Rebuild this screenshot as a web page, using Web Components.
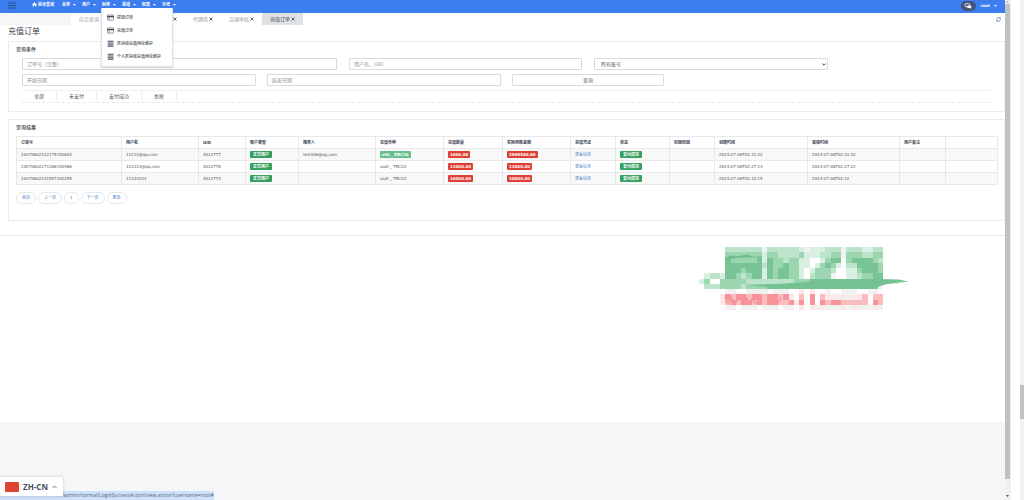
<!DOCTYPE html>
<html lang="zh-CN">
<head>
<meta charset="utf-8">
<title>充值订单</title>
<style>
html,body{margin:0;height:100%;overflow:hidden;background:#fff}
body{font-family:"DejaVu Sans","Noto Sans CJK SC",sans-serif;font-size:4px;line-height:8px;color:#4b5560}
</style>
</head>
<body>
<admin-app></admin-app>
<script>
const define = (name, html, setup) => customElements.define(name, class extends HTMLElement {
  connectedCallback() {
    if (this.shadowRoot) return;
    const root = this.attachShadow({mode: 'open'});
    const t = document.createElement('template');
    t.innerHTML = '<style>*{box-sizing:border-box}a{text-decoration:none;color:inherit}button{font:inherit;color:inherit;background:none;border:0;padding:0;margin:0}</style>' + html(this);
    root.append(t.content.cloneNode(true));
    if (setup) setup(this, root);
  }
});

const caret = '<svg width="3" height="2" viewBox="0 0 3 2"><path d="M0 0h3L1.5 1.8z" fill="currentColor"/></svg>';

define('nav-item', () => `
<style>:host{display:block;flex:none}a{display:flex;align-items:center;gap:3px}</style>
<a href="#"><slot></slot>${caret}</a>`);

define('menu-item', el => `
<style>:host{display:block}a{display:flex;align-items:center;gap:3px;height:13px;padding-left:5px;white-space:nowrap}</style>
<a href="#"><svg width="7" height="7" viewBox="0 0 6 6">${el.getAttribute('icon') === 'card'
  ? '<rect x=".3" y=".8" width="5.4" height="4.4" rx=".5" fill="#fff" stroke="#475060" stroke-width=".5"/><path d="M0 1.6h6v1.3H0z" fill="#475060"/><path d="M1 4.2h1.6" stroke="#475060" stroke-width=".5"/>'
  : '<path d="M.6 1h5M.6 2.5h5M.6 4h5M.6 5.4h5" stroke="#475060" stroke-width=".9"/>'}</svg><slot></slot></a>`);

define('top-bar', () => `
<style>
:host{display:flex;flex:none;position:relative;z-index:2;height:13px;background:#3c7df0;color:#fff;font-weight:700}
.burger{margin:2px 0 0 8px;width:8px;height:7px;display:block}
.burger svg{display:block}
nav{display:flex;gap:6px;margin-left:16px;height:9px;align-items:center}
.home{display:flex;align-items:center;gap:1px;margin-right:2px}
.right{margin-left:auto;display:flex;align-items:center;height:12px;padding-right:8px}
.chat{width:15px;height:10px;border-radius:5px;background:#47527a;display:flex;align-items:center;justify-content:center;margin-right:5px}
.user{display:flex;align-items:center;gap:4px}
.menu{position:absolute;left:101px;top:8px;width:72px;padding:3px 0;background:#fff;border:1px solid #e0e2e5;border-top:0;border-radius:1px;box-shadow:0 1px 2px #0003;color:#3d4652;font-weight:500}
</style>
<button class="burger" aria-label="菜单"><svg width="8" height="7" viewBox="0 0 8 7"><path d="M0 1h8M0 3.5h8M0 6h8" stroke="#29518f" stroke-width="1.2"/></svg></button>
<nav>
<a href="#" class="home"><svg width="5" height="5" viewBox="0 0 5 5"><path d="M2.5.3 0 2.6h.7v2h1.2V3.2h1.2v1.4h1.2v-2H5z" fill="#fff"/></svg>综合查询</a>
<nav-item>业务</nav-item><nav-item>用户</nav-item><nav-item>财务</nav-item><nav-item>渠道</nav-item><nav-item>配置</nav-item><nav-item>系统</nav-item>
</nav>
<div class="right"><button class="chat" aria-label="消息"><svg width="8" height="6" viewBox="0 0 8 6"><rect x="1" y=".6" width="4.6" height="3.2" rx="1" fill="none" stroke="#fff" stroke-width=".8"/><path d="M3.4 2.4h3.8v2.5H7l.2 1-1.4-1H3.4z" fill="#fff"/></svg></button>
<a href="#" class="user">root${caret}</a></div>
<div class="menu"><menu-item icon="card">提现订单</menu-item><menu-item icon="card">充值订单</menu-item><menu-item>区块链充值地址维护</menu-item><menu-item>个人区块链充值地址维护</menu-item></div>`);

define('page-tab', el => `
<style>
:host{display:flex;align-items:center;justify-content:flex-end;gap:1px;height:12px;padding:0 8px;font-size:5px;color:#999;white-space:nowrap}
:host([active]){background:#dfe1e2;color:#3f4955}
:host([wide]){width:78px}
:host([pinned]){padding-right:8px}
button{display:flex}
</style><a href="#"><slot></slot></a>${el.hasAttribute('pinned') ? '' : '<button aria-label="关闭"><svg width="4" height="4" viewBox="0 0 4 4"><path d="M.5.5l3 3M3.5.5l-3 3" stroke="#5b636d" stroke-width="1"/></svg></button>'}`);

define('tab-strip', () => `
<style>
:host{display:flex;flex:none;height:12px}
.lead{width:71px;background:#f5f6f7}
.refresh{margin:4px 4px 0 auto;height:5px;display:block}
svg{display:block}
</style><div class="lead"></div><slot></slot>
<button class="refresh" aria-label="刷新"><svg width="5" height="5" viewBox="0 0 5 5"><path d="M.6 2.3A1.9 1.9 0 0 1 4 1.4M4.4 2.7A1.9 1.9 0 0 1 1 3.6" fill="none" stroke="#5277a5" stroke-width=".7"/><path d="M4.7.3v1.7H3zM.3 4.7V3H2z" fill="#5277a5"/></svg></button>`);

define('data-panel', el => `
<style>
:host{display:block;border:1px solid #ececec;border-right-color:#f1f1f1;margin:0 0 7px 8px;padding:3px 8px 8px 7px}
h2{margin:0 0 5px;font-size:5px;line-height:8px;font-weight:500;color:#39424e}
</style><h2>${el.getAttribute('heading')}</h2><slot></slot>`);

define('search-form', () => `
<style>
:host{display:block;padding:0 6px}
.row{display:grid;gap:12px;margin-bottom:4px}
.one{grid-template-columns:315fr 233fr 234fr 150fr}
.two{grid-template-columns:234fr 234fr 152fr 315fr;gap:11px}
input,select,.go{width:100%;height:12px;border:1px solid #d9dbdd;border-radius:1px;background:#fff;font:inherit;font-size:5px;color:#555;padding:0 4px;margin:0;outline:0;display:block}
input::placeholder{color:#929292;opacity:1}
.sel{position:relative}
select{appearance:none;padding-left:6px}
.sel svg{position:absolute;right:2px;top:5px}
.go{text-align:center}
ul{display:flex;margin:0;padding:0;list-style:none;border-top:1px solid #f0f0f0;border-bottom:1px dashed #e9e9e9;font-size:5px}
li{height:11px;padding:0 12px;border-right:1px solid #eee;line-height:11px}
</style>
<form>
<div class="row one"><input aria-label="订单号" placeholder="订单号（完整）"><input aria-label="用户名" placeholder="用户名、UID"><div class="sel"><select aria-label="账号"><option>所有账号</option></select><svg width="4" height="3" viewBox="0 0 4 3"><path d="M.4.6 2 2.2 3.6.6" fill="none" stroke="#333" stroke-width=".9"/></svg></div></div>
<div class="row two"><input aria-label="开始日期" placeholder="开始日期"><input aria-label="结束日期" placeholder="结束日期"><button type="button" class="go">查询</button></div>
</form>
<ul><li><a href="#">全部</a></li><li><a href="#">未支付</a></li><li><a href="#">支付成功</a></li><li><a href="#">失败</a></li></ul>`);

define('status-badge', () => `
<style>
:host{display:inline-block;height:7px;line-height:7px;padding:0 2px;border-radius:1px;background:#35a05f;color:#fff;font-weight:700;vertical-align:middle}
:host([kind=red]){background:#df4034}
:host([kind=mint]){background:#67bf8e}
:host([kind=green]){padding:0 3px}
</style><slot></slot>`);

const widths = [105,77,47,53,77,68,59,68,45,54,45,93,92,46,52];
const heads = ['订单号','用户名','UID','账户类型','推荐人','充值币种','充值数量','实际到账金额','充值凭证','状态','驳回原因','创建时间','审核时间','用户备注',''];
const green = s => `<status-badge kind="green">${s}</status-badge>`;
const red = s => `<status-badge kind="red">${s}</status-badge>`;
const row = (no, user, uid, ref, coin, n, real, t1, t2) =>
  [no, user, uid, green('正式用户'), ref, coin, red(n), red(real), '<a href="#">查看信息</a>', green('支付成功'), '', t1, t2, '', ''];
const orders = [
  row('24070602312175150844','11212@qq.com','4012777','test006@qq.com','<status-badge kind="mint">eth _ ERC20</status-badge>','1000.00','2969540.00','2024-07-06T02:31:22','2024-07-06T02:31:32'),
  row('24070602271286192986','123123@qq.com','4012778','','usdt _ TRC20','11000.00','11000.00','2024-07-06T02:27:13','2024-07-06T02:27:22'),
  row('24070602101557340255','11333333','4012774','','usdt _ TRC20','10000.00','10000.00','2024-07-06T02:10:15','2024-07-06T02:12')
];
define('order-table', () => `
<style>
:host{display:block}
table{width:100%;table-layout:fixed;border-collapse:collapse}
th,td{border:1px solid #e9e9e9;height:12px;padding:0 0 0 4px;text-align:left;white-space:nowrap;line-height:8px;vertical-align:middle}
th{color:#39424e}
tbody tr:nth-child(odd){background:#f8f8f8}
td a{color:#4d8ac6}
</style>
<table><colgroup>${widths.map(w => `<col style="width:${w}px">`).join('')}</colgroup>
<thead><tr>${heads.map(h => `<th>${h}</th>`).join('')}</tr></thead>
<tbody>${orders.map(r => `<tr>${r.map(c => `<td>${c}</td>`).join('')}</tr>`).join('')}</tbody></table>`);

define('page-nav', () => `
<style>
:host{display:flex;gap:2px;margin:7px 0 8px;color:#4585c4}
a{height:12px;line-height:10px;border:1px solid #e6e8ea;border-radius:6px;padding:0 5px}
.now{color:#b0605c}
</style><a href="#">首页</a><a href="#">上一页</a><a href="#" class="now">1</a><a href="#">下一页</a><a href="#">尾页</a>`);

/* Mosaic emblem: one letter per cell, each letter is a tint. */
const tints = {g:'#f0f1f0',1:'#d9efe1',2:'#bce4cb',3:'#9bd6b1',4:'#79c496',r:'#fde7e8',p:'#fbbcc0',q:'#f7949b'};
const cells = [
'.....2222222g2222221g111222g2221122',
'.....3333333133222231112233g3332233',
'.....4333334143323311..1344.3444432',
'.....4444444243343311.13431.2244443',
'.....444344414344331.13332..1134443',
'.1221443234414344331.2333g..1123344',
'13..3333322222222233344444444444444321',
'.222333323333444444444444444444444g',
'.....gg..gggg.ggg..r.r..g..ggg..gg.',
'....rqpqqpqqpqqpqr.p.q.prrgrgrrp.pp',
'....rpqpqqpqpqqppqrq.q.qpqqppppp.qp',
'.....gg.ggg.ggg.gg.r.rgrgggrgrgggrg'];
define('mosaic-logo', () => `
<style>:host{display:block}svg{display:block}</style>
<svg width="212" height="64" viewBox="0 0 636 192" role="img" aria-label="水印"><g shape-rendering="crispEdges">${cells.map((line, y) => [...line].map((c, x) => c === '.' ? '' : `<rect x="${x*15.8}" y="${y*15.8}" width="16" height="16" fill="${tints[c]}"/>`).join('')).join('')}</g>
<path d="M78 34q14-10 28-8t20 0q18-6 28 0t34 0v6q-60-4-108 6z" fill="#6fbd8d"/>
<path d="M150 114q160-4 206-14 120-4 248-2l24 6-36 3q-40 4-62 16-80 4-188 0-110 2-192-9z" fill="#74c191"/>
<path d="M78 150q5 18 9 18t10-16q6 16 10 16t12-18M142 150q5 18 9 18t10-16q6 16 10 16t12-18M205 150q5 18 9 18t10-16q6 16 10 16t12-18" fill="none" stroke="#f5959b" stroke-width="5"/></svg>`);

define('language-switch', () => `
<style>
:host{position:absolute;left:0;bottom:4px;z-index:3;display:block;background:#fff;box-shadow:0 0 3px #0003}
button{display:flex;align-items:center;width:63px;height:19px;padding-left:5px;gap:4px;font:700 8px/12px "Open Sans",sans-serif;color:#46505e}
.flag{width:14px;height:10px;background:#df4331;border-radius:1px}
</style><button><span class="flag"></span>ZH-CN<svg width="5" height="4" viewBox="0 0 5 4"><path d="M.5 3 2.5 1l2 2" fill="none" stroke="#46505e" stroke-width=".8"/></svg></button>`);

define('link-status', () => `
<style>:host{position:absolute;left:0;bottom:0;z-index:2;width:214px;box-sizing:border-box;height:9px;background:#cfe1fa;border-radius:0 1px 0 0;padding-left:62px;font:5px/9px "Open Sans",sans-serif;color:#59677d;white-space:nowrap}</style><slot></slot>`);

define('scroll-rail', el => `
<style>
:host{display:flex;flex-direction:column;flex:none;width:6px;background:#f1f1f1}
:host([outer]){width:4px;margin-left:9px}
svg{display:block;flex:none}
.thumb{background:#c1c1c1}
:host(:not([outer])) .thumb{flex:1;margin:0 1px 15px 0}
:host([outer]) .thumb{margin-top:385px;height:34px}
</style>${el.hasAttribute('outer') ? '<div class="thumb"></div>' : '<svg width="5" height="4" viewBox="0 0 5 4"><path d="M1 2.6h3L2.5 1z" fill="#999"/></svg><div class="thumb"></div><svg width="5" height="6" viewBox="0 0 5 6"><path d="M1 1h3L2.5 3z" fill="#555"/></svg>'}`);

define('admin-app', () => `
<style>
:host{display:flex;height:100vh;position:relative;overflow:hidden}
.app{flex:1;min-width:0;display:flex;flex-direction:column;background:#f4f6f8}
main{background:#fff;flex:none}
h1{margin:0 0 3px 8px;font-size:8px;line-height:13px;font-weight:400;color:#39424e}
.results{min-height:102px;box-sizing:border-box}
.after{border-top:1px solid #ececec;margin-top:14px;padding:11px 94px 111px 0;display:flex;justify-content:flex-end}
</style>
<div class="app"><top-bar></top-bar>
<main>
<tab-strip><page-tab pinned>综合查询</page-tab><page-tab wide></page-tab><page-tab>代理商</page-tab><page-tab>店铺审核</page-tab><page-tab active>充值订单</page-tab></tab-strip>
<h1>充值订单</h1>
<data-panel heading="查询条件"><search-form></search-form></data-panel>
<data-panel heading="查询结果" class="results"><order-table></order-table><page-nav></page-nav></data-panel>
<div class="after"><mosaic-logo></mosaic-logo></div>
</main></div>
<scroll-rail></scroll-rail><scroll-rail outer></scroll-rail>
<link-status>/admin/normal/LoginSuccessAction!view.action?username=root#</link-status>
<language-switch></language-switch>`);
</script>
</body>
</html>
